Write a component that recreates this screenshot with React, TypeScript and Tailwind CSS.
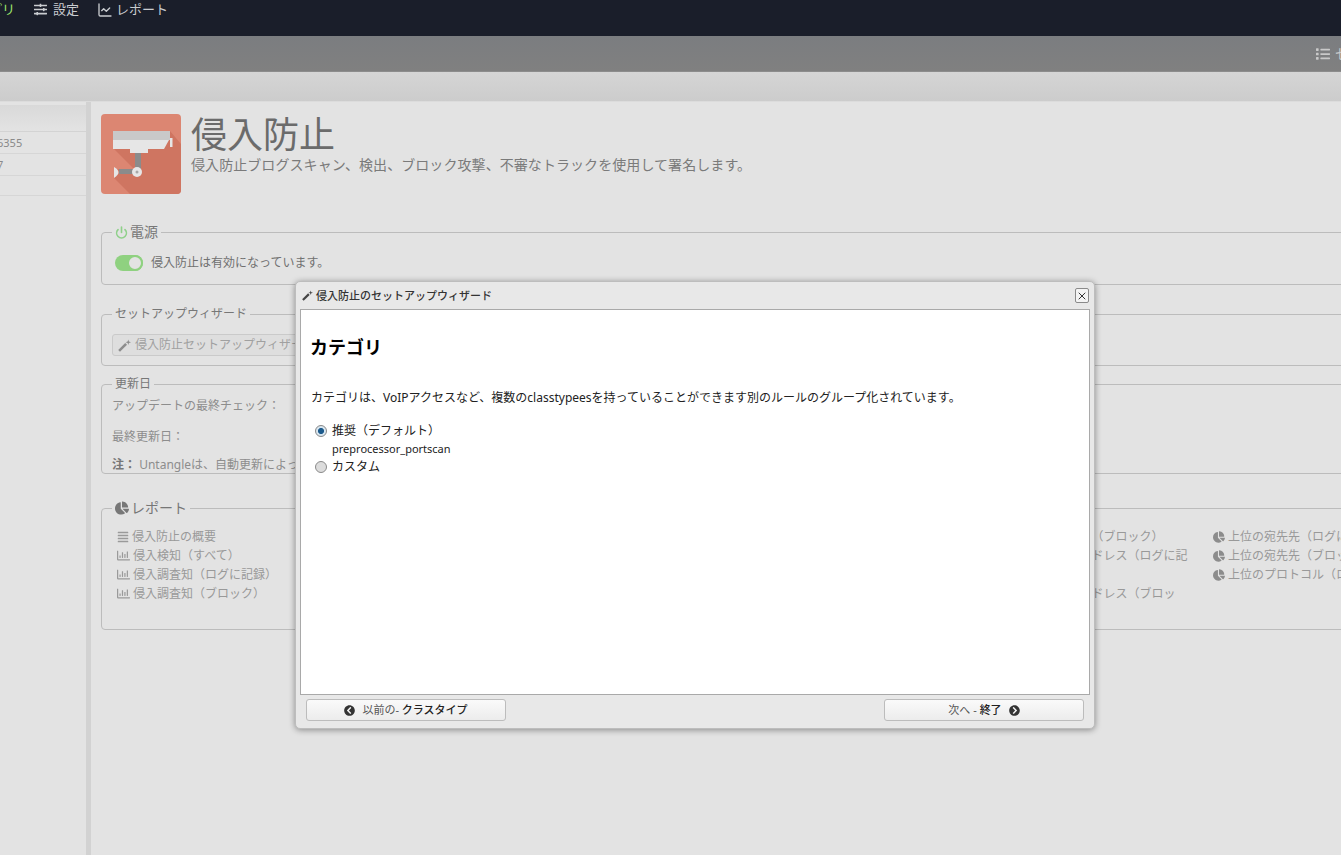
import React from 'react';
import {
  FaAlignJustify,
  FaChartPie,
  FaChevronCircleLeft,
  FaChevronCircleRight,
  FaList,
  FaRegChartBar,
  FaSlidersH,
} from 'react-icons/fa';
import { LuChartLine, LuPower, LuX } from 'react-icons/lu';

const font = { fontFamily: '"Noto Sans", "Noto Sans CJK JP", sans-serif' };

const CameraTile = () => (
  <svg viewBox="0 0 80 80" className="w-[80px] h-[80px] shrink-0">
    <rect width="80" height="80" rx="4" fill="#dc8672" />
    <path d="M13 35 L33 55 L13 55 L13 64 L29 80 H76 Q80 80 80 76 V30 L69 17 Z" fill="#cf7561" />
    <rect x="12" y="17" width="57" height="9" fill="#c9c9c9" />
    <path d="M12 26 H68 L63 35 H12 Z" fill="#e6e6e6" />
    <rect x="69" y="24" width="2.5" height="9" fill="#e6e6e6" />
    <rect x="29" y="35" width="18" height="4" fill="#e6e6e6" />
    <rect x="34" y="39" width="6" height="17" fill="#8b8b8b" />
    <rect x="18" y="55" width="16" height="5" fill="#8b8b8b" />
    <path d="M13 53 Q22 58 13 64 Z" fill="#e6e6e6" />
    <circle cx="36" cy="58" r="5" fill="#e6e6e6" />
    <circle cx="36" cy="58" r="1.5" fill="#a8a8a8" />
  </svg>
);

const Wand = ({ className }: { className: string }) => (
  <svg viewBox="0 0 12 12" className={className}>
    <path d="M1 11 L7.5 4.5" stroke="currentColor" strokeWidth="2.4" fill="none" />
    <path d="M9.5 0.5 L10.1 2.4 L12 3 L10.1 3.6 L9.5 5.5 L8.9 3.6 L7 3 L8.9 2.4 Z" fill="currentColor" />
  </svg>
);

const ReportLink = ({ icon, label }: { icon: 'list' | 'bar' | 'pie'; label: string }) => (
  <div className="flex items-center h-[19px] whitespace-nowrap">
    {icon === 'list' && <FaAlignJustify className="w-[12px] h-[12px] mr-[3px] text-[#9a9a9a]" />}
    {icon === 'bar' && <FaRegChartBar className="w-[13px] h-[13px] mr-[3px] text-[#9a9a9a]" />}
    {icon === 'pie' && <FaChartPie className="w-[12px] h-[12px] mr-[3px] text-[#8c8c8c]" />}
    <span>{label}</span>
  </div>
);

// long labels in the narrow column wrap onto a second line
const WrapLink = ({ label }: { label: string }) => (
  <div className="leading-[19px]">
    <FaChartPie className="inline w-[12px] h-[12px] mr-[3px] text-[#8c8c8c]" />
    {label}
  </div>
);

const Legend = ({ children, big }: { children: React.ReactNode; big?: boolean }) => (
  <legend className={`px-[3px] flex items-center gap-[2px] leading-[18px] ${big ? 'text-[14px]' : 'text-[12px]'} text-[#777]`}>
    {children}
  </legend>
);

const radio =
  'w-[12px] h-[12px] -mt-[1px] appearance-none rounded-full border border-[#8a8a8a] bg-[#dcdcdc] checked:bg-[radial-gradient(circle,#1c5a8c_38%,#d8e6f0_48%)]';

export default function App() {
  return (
    <div className="relative w-[1341px] h-[855px] overflow-hidden bg-[#e3e3e3] text-[12px]" style={font}>
      {/* top nav */}
      <div className="h-[36px] bg-[#1a1e2a] flex items-start text-[13px] text-[#c9ccd0] whitespace-nowrap">
        <span className="text-[#9ee56b] -ml-[24px] w-[58px]">アプリ</span>
        <span className="flex items-center gap-[6px] w-[63px]">
          <FaSlidersH className="w-[13px] h-[13px]" />
          設定
        </span>
        <span className="flex items-center gap-[3px]">
          <LuChartLine className="w-[16px] h-[16px]" />
          レポート
        </span>
      </div>

      {/* grey bars */}
      <div className="h-[36px] bg-gradient-to-b from-[#7b7d80] to-[#808080] border-b border-[#8c8c8c] flex items-center justify-end -mr-[12px] text-[14px] text-[#c9c9c9]">
        <FaList className="w-[14px] h-[14px] mr-[5px]" />
        <span className="w-[18px] overflow-hidden whitespace-nowrap">セッション</span>
      </div>
      <div className="h-[30px] bg-gradient-to-b from-[#d5d5d5] to-[#cccccc] border-b border-[#dcdcdc]" />

      <div className="flex h-[753px]">
        {/* left list, cut off by the scroll */}
        <div className="w-[86px] shrink-0 pt-[3px] overflow-hidden text-[#8a8a8a] text-[11px]">
          <div className="h-[27px] bg-gradient-to-b from-[#d9d9d9] to-[#e3e3e3] border-b border-[#d3d3d3]" />
          <div className="h-[22px] leading-[22px] border-b border-[#d6d6d6] -ml-[3px]">6355</div>
          <div className="h-[22px] leading-[22px] border-b border-[#d6d6d6] -ml-[3px]">7</div>
          <div className="h-[20px] border-b border-[#d6d6d6]" />
        </div>
        <div className="w-[5px] shrink-0 bg-[#d2d2d2]" />

        {/* main column */}
        <div className="flex-1 min-w-0 pl-[10px] pt-[12px] overflow-hidden">
          <div className="flex gap-[10px]">
            <CameraTile />
            <div className="text-[#6b6b6b] pt-[1px]">
              <div className="text-[36px] leading-[40px]">侵入防止</div>
              <div className="text-[14px] leading-[20px] tracking-[0.07px] text-[#7a7a7a]">
                侵入防止ブログスキャン、検出、ブロック攻撃、不審なトラックを使用して署名します。
              </div>
            </div>
          </div>

          <div className="-mr-[20px] text-[#8a8a8a]">
            <fieldset className="mt-[29px] h-[62px] border border-[#bcbcbc] rounded-[4px] px-[10px]">
              <Legend big>
                <LuPower strokeWidth={3} className="w-[13px] h-[13px] text-[#8fd08a]" />
                <span>電源</span>
              </Legend>
              <div className="flex items-center gap-[8px] mt-[13px] ml-[3px] text-[#707070]">
                <span className="relative w-[28px] h-[16px] rounded-full bg-[#8fd180]">
                  <span className="absolute right-0 top-0 w-[16px] h-[16px] rounded-full bg-[#e3e3e3] border-[2px] border-[#8fd180]" />
                </span>
                侵入防止は有効になっています。
              </div>
            </fieldset>

            <fieldset className="mt-[20px] h-[61px] border border-[#bcbcbc] rounded-[4px] px-[10px]">
              <Legend>セットアップウィザード</Legend>
              <div className="w-[240px] h-[22px] mt-[11px] flex items-center gap-[4px] pl-[5px] bg-[#dedede] border border-[#cacaca] rounded-[3px] text-[#a0a0a0]">
                <Wand className="w-[13px] h-[13px] text-[#8d8d8d]" />
                侵入防止セットアップウィザード
              </div>
            </fieldset>

            <fieldset className="mt-[9px] h-[99px] border border-[#bcbcbc] rounded-[4px] px-[10px] text-[#8d8d8d]">
              <Legend>更新日</Legend>
              <div className="leading-[18px] mt-[4px]">アップデートの最終チェック：</div>
              <div className="leading-[18px] mt-[13px]">最終更新日：</div>
              <div className="leading-[18px] mt-[10px]">
                <b className="text-[#777]">注：</b> Untangleは、自動更新によって署名を更新します。
              </div>
            </fieldset>

            <fieldset className="mt-[25px] h-[131px] border border-[#bcbcbc] rounded-[4px] px-[10px] text-[#999]">
              <Legend big>
                <FaChartPie className="w-[14px] h-[14px] text-[#777]" />
                <span>レポート</span>
              </Legend>
              <div className="flex mt-[10px] ml-[5px]">
                <div className="w-[840px] shrink-0">
                  <ReportLink icon="list" label="侵入防止の概要" />
                  <ReportLink icon="bar" label="侵入検知（すべて）" />
                  <ReportLink icon="bar" label="侵入調査知（ログに記録）" />
                  <ReportLink icon="bar" label="侵入調査知（ブロック）" />
                </div>
                <div className="w-[232px] shrink-0">
                  <WrapLink label="上位のクライアント名（ブロック）" />
                  <WrapLink label="上位のクライアントアドレス（ログに記録）" />
                  <WrapLink label="上位のクライアントアドレス（ブロック）" />
                </div>
                <div className="ml-[24px]">
                  <ReportLink icon="pie" label="上位の宛先先（ログに記録）" />
                  <ReportLink icon="pie" label="上位の宛先先（ブロック）" />
                  <ReportLink icon="pie" label="上位のプロトコル（ログに記録）" />
                </div>
              </div>
            </fieldset>
          </div>
        </div>
      </div>

      {/* wizard dialog */}
      <div className="absolute left-[295px] top-[281px] w-[800px] h-[448px] flex flex-col bg-[#e8e8e8] border border-[#bdbdbd] rounded-[5px] shadow-[0_1px_6px_rgba(0,0,0,0.4)] px-[4px]">
        <div className="h-[27px] shrink-0 flex items-center gap-[3px] pl-[2px] pt-[1px] text-[11px] font-medium text-[#333]">
          <Wand className="w-[11px] h-[11px] text-[#444] -mt-[2px]" />
          <span className="flex-1">侵入防止のセットアップウィザード</span>
          <span className="w-[14px] h-[15px] mr-[1px] -mt-[1px] flex items-center justify-center bg-[#f4f4f4] border border-[#8a8a8a] rounded-[2px]">
            <LuX className="w-[12px] h-[12px] text-[#333]" />
          </span>
        </div>
        <div className="h-[386px] shrink-0 bg-white border border-[#a9a9a9] px-[10px] text-[#222]">
          <h2 className="mt-[25px] -ml-[1px] text-[18px] leading-[24px] font-bold text-black">カテゴリ</h2>
          <p className="mt-[30px] leading-[18px]">
            カテゴリは、VoIPアクセスなど、複数のclasstypeesを持っていることができます別のルールのグループ化されています。
          </p>
          <label className="mt-[15px] ml-[4px] flex items-center gap-[5px] h-[18px]">
            <input type="radio" name="cat" defaultChecked className={radio} />
            推奨（デフォルト）
          </label>
          <div className="ml-[21px] leading-[18px] text-[11px]">preprocessor_portscan</div>
          <label className="ml-[4px] flex items-center gap-[5px] h-[18px]">
            <input type="radio" name="cat" className={radio} />
            カスタム
          </label>
        </div>
        <div className="flex justify-between px-[6px] pt-[4px]">
          <button className="w-[200px] h-[22px] flex items-center justify-center gap-[7px] bg-gradient-to-b from-[#fafafa] to-[#ececec] border border-[#bcbcbc] rounded-[3px] text-[#555] text-[11px]">
            <FaChevronCircleLeft className="w-[11px] h-[11px] text-[#333]" />
            <span>以前の- <b className="font-medium text-[#222]">クラスタイプ</b></span>
          </button>
          <button className="w-[200px] h-[22px] flex items-center justify-center gap-[7px] bg-gradient-to-b from-[#fafafa] to-[#ececec] border border-[#bcbcbc] rounded-[3px] text-[#555] text-[11px]">
            <span>次へ - <b className="font-medium text-[#222]">終了</b></span>
            <FaChevronCircleRight className="w-[11px] h-[11px] text-[#333]" />
          </button>
        </div>
      </div>
    </div>
  );
}
